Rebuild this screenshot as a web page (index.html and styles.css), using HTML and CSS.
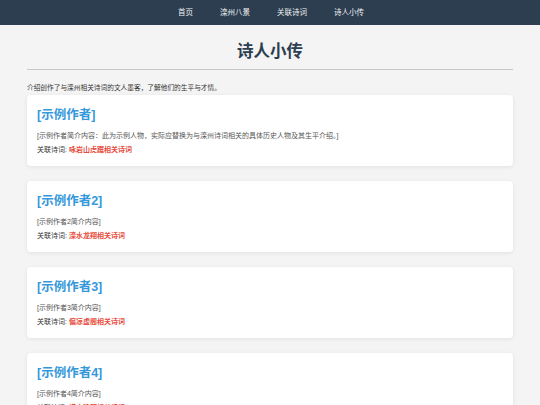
FILE: index.html
```html
<!DOCTYPE html>
<html lang="zh">
<head>
<meta charset="utf-8">
<title>诗人小传</title>
<link rel="stylesheet" href="styles.css">
</head>
<body>
<nav class="nav">
  <a href="#">首页</a>
  <a href="#">滦州八景</a>
  <a href="#">关联诗词</a>
  <a href="#">诗人小传</a>
</nav>
<main class="container">
  <h1 class="page-title">诗人小传</h1>
  <p class="intro">介绍创作了与滦州相关诗词的文人墨客，了解他们的生平与才情。</p>
  <section class="card">
    <h2 class="card-title">[示例作者]</h2>
    <p class="desc">[示例作者简介内容：此为示例人物，实际应替换为与滦州诗词相关的具体历史人物及其生平介绍。]</p>
    <p class="related">关联诗词: <a href="#">咏岩山虎踞相关诗词</a></p>
  </section>
  <section class="card">
    <h2 class="card-title">[示例作者2]</h2>
    <p class="desc">[示例作者2简介内容]</p>
    <p class="related">关联诗词: <a href="#">滦水龙翔相关诗词</a></p>
  </section>
  <section class="card">
    <h2 class="card-title">[示例作者3]</h2>
    <p class="desc">[示例作者3简介内容]</p>
    <p class="related">关联诗词: <a href="#">偏凉虚阁相关诗词</a></p>
  </section>
  <section class="card">
    <h2 class="card-title">[示例作者4]</h2>
    <p class="desc">[示例作者4简介内容]</p>
    <p class="related">关联诗词: <a href="#">横山晚照相关诗词</a></p>
  </section>
</main>
</body>
</html>
```
FILE: styles.css
```css
* { box-sizing: border-box; }
html, body { margin: 0; padding: 0; }
body {
  background: #f4f4f4;
  font-family: "Liberation Sans", "Noto Sans CJK SC", sans-serif;
  color: #333;
}
.nav {
  height: 25px;
  background: #2c3e50;
  display: flex;
  justify-content: center;
  align-items: center;
  gap: 27px;
  padding-left: 2px;
}
.nav a {
  color: #f2f2f2;
  text-decoration: none;
  font-size: 7.5px;
  line-height: 10px;
}
.container {
  width: 486px;
  margin: 0 auto;
}
.page-title {
  margin: 0;
  padding-top: 16px;
  padding-bottom: 8px;
  font-size: 16.5px;
  line-height: 20px;
  font-weight: 700;
  text-align: center;
  color: #2c3e50;
  border-bottom: 1px solid #c8c8c8;
}
.intro {
  margin: 13px 0 2px;
  font-size: 6.7px;
  line-height: 10px;
  color: #333;
}
.card {
  background: #fff;
  border-radius: 4px;
  box-shadow: 0 1px 4px rgba(0,0,0,0.08);
  padding: 12px 10px 11px;
  margin-bottom: 15px;
}
.card-title {
  margin: 0 0 8px;
  font-size: 12.5px;
  line-height: 16px;
  font-weight: 600;
  color: #3498db;
}
.desc {
  margin: 0 0 4px;
  font-size: 7px;
  line-height: 10px;
  color: #555;
}
.related {
  margin: 0;
  font-size: 7px;
  line-height: 10px;
  color: #333;
}
.related a {
  color: #e74c3c;
  font-weight: 700;
  text-decoration: none;
}
```
